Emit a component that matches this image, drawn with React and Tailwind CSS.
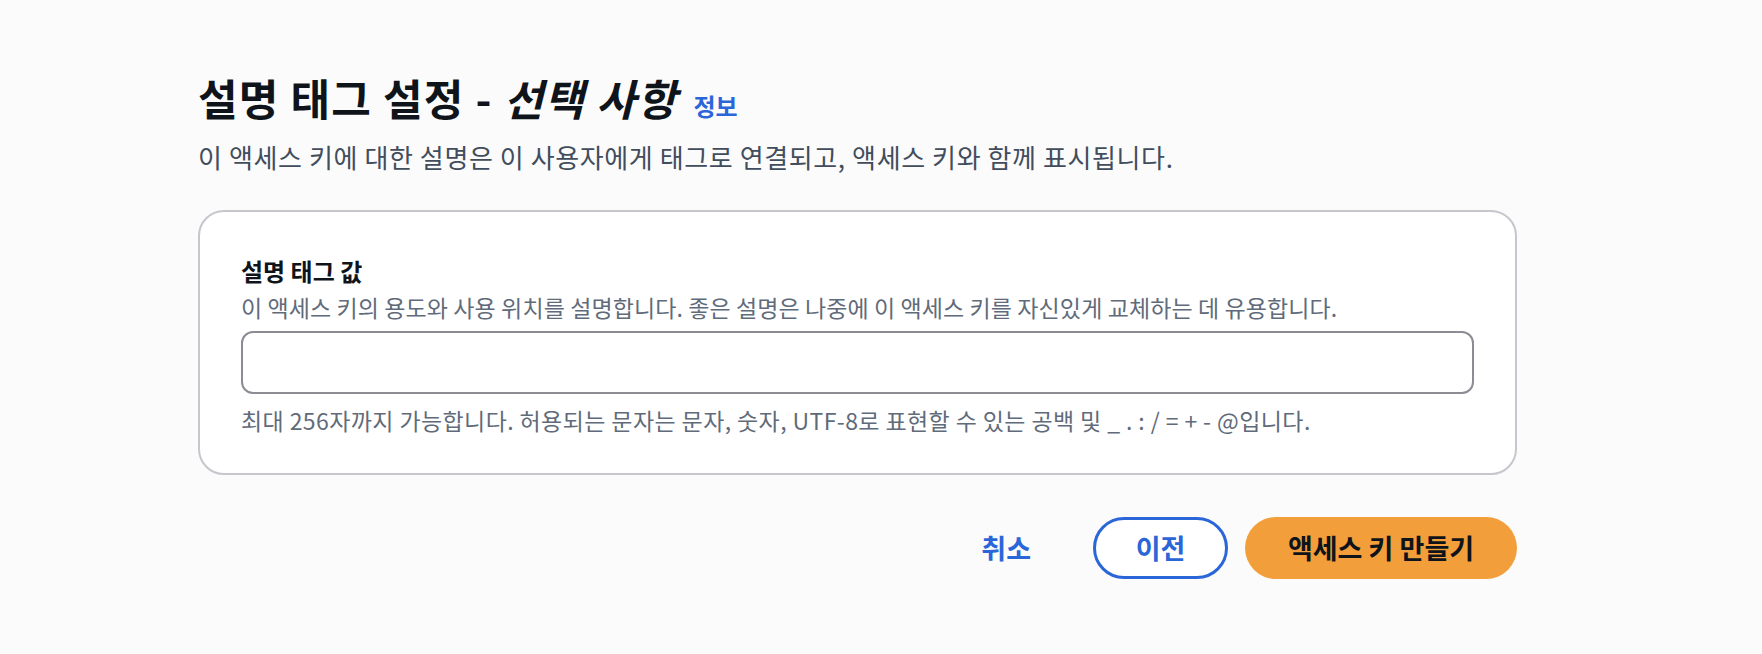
import React, { useState } from 'react';

const font = { fontFamily: '"Noto Sans CJK KR", "Noto Sans", sans-serif' };

const App = () => {
  const [description, setDescription] = useState('');

  return (
    <div
      className="min-h-screen w-full bg-[#fbfbfb] pl-[198px] pt-[71px] text-[#0f141a]"
      style={font}
    >
      <div className="w-[1319px]">
        {/* Encabezado */}
        <div className="flex items-baseline">
          <h1 className="text-[43px] leading-[52px] font-bold tracking-[1.2px]">
            설명 태그 설정 - <span className="italic">선택 사항</span>
          </h1>
          <a href="#" className="ml-[16px] text-[24px] font-bold text-[#2b66d9]">
            정보
          </a>
        </div>
        <p className="mt-[18px] text-[26px] leading-[30px] tracking-[0.6px] text-[#414d5c]">
          이 액세스 키에 대한 설명은 이 사용자에게 태그로 연결되고, 액세스 키와 함께 표시됩니다.
        </p>

        {/* Tarjeta */}
        <section className="mt-[38px] rounded-[26px] border-2 border-[#c6c6cd] bg-white px-[41px] pt-[43px] pb-[38px]">
          <label className="block text-[24px] leading-[32px] font-bold">설명 태그 값</label>
          <p className="mt-[5px] text-[23px] leading-[30px] tracking-[0.1px] text-[#5f6b7a]">
            이 액세스 키의 용도와 사용 위치를 설명합니다. 좋은 설명은 나중에 이 액세스 키를 자신있게 교체하는 데 유용합니다.
          </p>
          <input
            type="text"
            value={description}
            onChange={(e) => setDescription(e.target.value)}
            className="mt-[9px] block h-[63px] w-full rounded-[12px] border-2 border-[#8c8c94] bg-white px-4 text-[23px] outline-none"
          />
          <p className="mt-[11px] text-[23px] leading-[30px] tracking-[0.4px] text-[#5f6b7a]">
            최대 256자까지 가능합니다. 허용되는 문자는 문자, 숫자, UTF-8로 표현할 수 있는 공백 및 _ . : / = + - @입니다.
          </p>
        </section>

        {/* Botones */}
        <div className="mt-[42px] flex items-center justify-end">
          <button className="mr-[62px] text-[27px] font-bold text-[#2b66d9]">취소</button>
          <button className="h-[62px] w-[135px] rounded-full border-[3px] border-[#2b66d9] bg-white text-[27px] font-bold text-[#2b66d9]">
            이전
          </button>
          <button className="ml-[17px] h-[62px] w-[272px] rounded-full bg-[#f29e3a] text-[27px] font-bold text-[#0f141a]">
            액세스 키 만들기
          </button>
        </div>
      </div>
    </div>
  );
};

export default App;
